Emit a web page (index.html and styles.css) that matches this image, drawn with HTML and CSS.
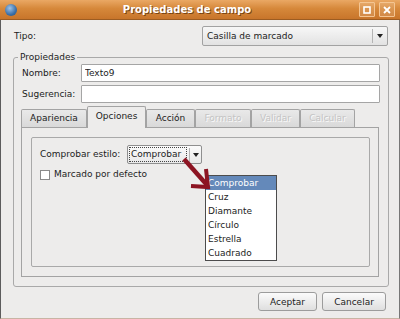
FILE: index.html
```html
<!DOCTYPE html>
<html lang="es">

<head>
    <meta charset="UTF-8">
    <title>Propiedades de campo</title>
    <link rel="stylesheet" href="styles.css">
</head>

<body>
    <div class="window">
        <div class="titlebar">
            <span class="globe"></span>
            <span class="title">Propiedades de campo</span>
            <span class="wbtn">
                <svg width="8" height="8" viewBox="0 0 8 8"><rect x="1" y="1" width="6" height="6" fill="none" stroke="#fff" stroke-width="1.6"/></svg>
            </span>
            <span class="wbtn">
                <svg width="8" height="8" viewBox="0 0 8 8"><path d="M1 1L7 7M7 1L1 7" stroke="#fff" stroke-width="1.8"/></svg>
            </span>
        </div>

        <div class="content">
            <div class="tipo-row">
                <span>Tipo:</span>
                <div class="combo wide">
                    <span class="combo-text">Casilla de marcado</span>
                    <span class="combo-arrow"></span>
                </div>
            </div>

            <fieldset class="frame">
                <legend>Propiedades</legend>
                <div class="field">
                    <label>Nombre:</label>
                    <input type="text" value="Texto9">
                </div>
                <div class="field">
                    <label>Sugerencia:</label>
                    <input type="text">
                </div>

                <div class="tabs">
                    <span class="tab w66">Apariencia</span>
                    <span class="tab active w59">Opciones</span>
                    <span class="tab w49">Acción</span>
                    <span class="tab disabled w56">Formato</span>
                    <span class="tab disabled w49">Validar</span>
                    <span class="tab disabled w55">Calcular</span>
                </div>
                <div class="panel">
                    <div class="inner">
                        <div class="style-row">
                            <span class="style-label">Comprobar estilo:</span>
                            <div class="combo small">
                                <span class="focus">Comprobar</span>
                                <span class="combo-arrow"></span>
                            </div>
                        </div>
                        <div class="check-row">
                            <span class="checkbox"></span>
                            <span>Marcado por defecto</span>
                        </div>
                    </div>
                </div>
            </fieldset>

            <div class="actions">
                <button class="button w59">Aceptar</button>
                <button class="button w64">Cancelar</button>
            </div>
        </div>

        <ul class="dropdown">
            <li class="selected">Comprobar</li>
            <li>Cruz</li>
            <li>Diamante</li>
            <li>Círculo</li>
            <li>Estrella</li>
            <li>Cuadrado</li>
        </ul>

        <svg class="pointer" width="40" height="40" viewBox="0 0 40 40">
            <path d="M4 3L27 29" stroke="#8c1422" stroke-width="4.5" fill="none"/>
            <path d="M26 13L28 31L11 30" stroke="#8c1422" stroke-width="4" fill="none"/>
        </svg>
    </div>
</body>

</html>
```

FILE: styles.css
```css
body {
    margin: 0;
    font-family: "DejaVu Sans", sans-serif;
    font-size: 9px;
    line-height: 11px;
    color: #1c1c1c;
}

.window {
    position: relative;
    width: 400px;
    height: 319px;
    display: flex;
    flex-direction: column;
    background: #edeceb;
}

.titlebar {
    height: 20px;
    box-sizing: border-box;
    display: flex;
    align-items: center;
    padding: 0 5px 0 5px;
    gap: 4px;
    background: linear-gradient(#eaa864, #d6883a 45%, #c8752b);
    border-bottom: 1px solid #9c5c22;
}

.globe {
    width: 12px;
    height: 12px;
    border-radius: 50%;
    background: radial-gradient(circle at 40% 35%, #9fc3e8, #3a6fa8 60%, #24507f);
}

.title {
    flex: 1;
    text-align: center;
    color: #fff;
    font-weight: bold;
    font-size: 10px;
    text-shadow: 1px 1px 0 #7a4414;
    margin-right: 2px;
}

.wbtn {
    width: 16px;
    height: 15px;
    box-sizing: border-box;
    border: 1px solid #f4c592;
    border-radius: 1px;
    background: rgba(255, 255, 255, 0.12);
    display: flex;
    align-items: center;
    justify-content: center;
}

.content {
    flex: 1;
    border-left: 1px solid #5c5c5c;
    border-right: 1px solid #777;
    border-bottom: 1px solid #c8b4a4;
    padding: 6px 10px 0 12px;
}

.tipo-row {
    display: flex;
    justify-content: space-between;
    align-items: center;
    padding: 0 1px;
}

.combo {
    display: flex;
    align-items: center;
    box-sizing: border-box;
    border: 1px solid #a2a2a2;
    border-radius: 2px;
    background: linear-gradient(#f7f7f7, #e2e2e2);
}

.combo.wide {
    width: 186px;
    height: 20px;
}

.combo.wide .combo-text {
    flex: 1;
    padding-left: 4px;
}

.combo-arrow {
    width: 14px;
    height: 14px;
    border-left: 1px solid #b4b4b4;
    position: relative;
}

.combo-arrow::after {
    content: "";
    position: absolute;
    left: 4px;
    top: 5px;
    border-left: 3px solid transparent;
    border-right: 3px solid transparent;
    border-top: 4px solid #222;
}

.frame {
    margin: 6px 0 0;
    padding: 1px 8px 9px 8px;
    border: 1px solid #a9a9a9;
    border-radius: 3px;
}

.frame legend {
    padding: 0 2px;
    margin-left: -4px;
    line-height: 11px;
}

.field {
    display: flex;
    align-items: center;
    margin-bottom: 3px;
}

.field label {
    width: 59px;
}

.field input {
    flex: 1;
    height: 18px;
    box-sizing: border-box;
    border: 1px solid #a5a5a5;
    border-radius: 1px;
    padding: 0 3px;
    font-family: "DejaVu Sans", sans-serif;
    font-size: 9px;
    color: #1c1c1c;
    background: #fff;
}

.tabs {
    display: flex;
    align-items: flex-end;
    margin: 1px 1px 0 -1px;
}

.tab {
    height: 18px;
    box-sizing: border-box;
    border: 1px solid #a3a3a3;
    border-bottom: none;
    border-radius: 2px 2px 0 0;
    background: linear-gradient(#e9e9e9, #d9d9d9);
    text-align: center;
    padding-top: 3px;
}

.tab.active {
    height: 22px;
    margin-bottom: -1px;
    background: #edeceb;
    padding-top: 4px;
    position: relative;
}

.tab.disabled {
    color: #c4c4c4;
    text-shadow: 1px 1px 0 #fafafa;
}

.w49 { width: 49px; }
.w55 { width: 55px; }
.w56 { width: 56px; }
.w59 { width: 59px; }
.w64 { width: 64px; }
.w66 { width: 66px; }

.panel {
    margin: 0 1px 0 -1px;
    border: 1px solid #a3a3a3;
    padding: 9px 8px 9px 9px;
}

.inner {
    height: 130px;
    box-sizing: border-box;
    border: 1px solid #a9a9a9;
    border-radius: 2px;
    padding: 7px 8px;
}

.style-row {
    display: flex;
    align-items: center;
}

.style-label {
    width: 87px;
}

.combo.small {
    width: 75px;
    height: 19px;
    border-color: #8f8f8f;
    background: linear-gradient(#fbfbfb, #e9e9e9);
}

.focus {
    flex: 1;
    margin: 1px 2px 1px 1px;
    padding: 1px 1px;
    border: 1px dotted #444;
}

.combo.small .combo-arrow {
    width: 11px;
}

.combo.small .combo-arrow::after {
    left: 3px;
}

.check-row {
    display: flex;
    align-items: center;
    gap: 4px;
    margin-top: 5px;
}

.checkbox {
    width: 10px;
    height: 10px;
    box-sizing: border-box;
    border: 1px solid #8a8a8a;
    background: #fff;
}

.actions {
    display: flex;
    justify-content: flex-end;
    gap: 5px;
    margin: 5px 3px 0 0;
}

.button {
    height: 19px;
    box-sizing: border-box;
    border: 1px solid #9c9c9c;
    border-radius: 3px;
    background: linear-gradient(#fbfbfb, #dfdfdf);
    font-family: "DejaVu Sans", sans-serif;
    font-size: 9px;
    color: #1c1c1c;
    padding: 0;
}

.dropdown {
    position: absolute;
    left: 205px;
    top: 175px;
    width: 70px;
    margin: 0;
    padding: 0;
    list-style: none;
    background: #fff;
    border: 1px solid #4c4c4c;
}

.dropdown li {
    height: 14px;
    line-height: 14px;
    padding-left: 2px;
}

.dropdown li.selected {
    background: #6489ba;
    color: #fff;
}

.pointer {
    position: absolute;
    left: 180px;
    top: 156px;
}
```
